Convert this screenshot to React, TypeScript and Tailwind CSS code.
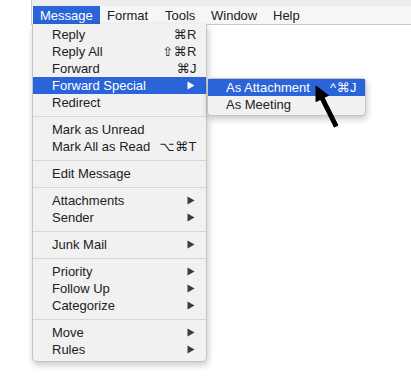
import React from "react";

type Item =
  | { kind: "sep" }
  | { kind: "item"; label: string; shortcut?: string; sub?: boolean; active?: boolean };

const ITEMS: Item[] = [
  { kind: "item", label: "Reply", shortcut: "⌘R" },
  { kind: "item", label: "Reply All", shortcut: "⇧⌘R" },
  { kind: "item", label: "Forward", shortcut: "⌘J" },
  { kind: "item", label: "Forward Special", sub: true, active: true },
  { kind: "item", label: "Redirect" },
  { kind: "sep" },
  { kind: "item", label: "Mark as Unread" },
  { kind: "item", label: "Mark All as Read", shortcut: "⌥⌘T" },
  { kind: "sep" },
  { kind: "item", label: "Edit Message" },
  { kind: "sep" },
  { kind: "item", label: "Attachments", sub: true },
  { kind: "item", label: "Sender", sub: true },
  { kind: "sep" },
  { kind: "item", label: "Junk Mail", sub: true },
  { kind: "sep" },
  { kind: "item", label: "Priority", sub: true },
  { kind: "item", label: "Follow Up", sub: true },
  { kind: "item", label: "Categorize", sub: true },
  { kind: "sep" },
  { kind: "item", label: "Move", sub: true },
  { kind: "item", label: "Rules", sub: true },
];

function SubArrow({ white }: { white?: boolean }) {
  return (
    <svg width="8" height="9" viewBox="0 0 8 9" className="mr-[2px]">
      <path d="M0.5 0.5 L7.5 4.5 L0.5 8.5 Z" fill={white ? "#ffffff" : "#3a3a3a"} />
    </svg>
  );
}

function MenuRow({ item }: { item: Item }) {
  if (item.kind === "sep") {
    return (
      <div className="h-[10px] flex items-center">
        <div className="w-full h-px bg-[#d6d6d6]" />
      </div>
    );
  }
  return (
    <div
      className={`h-[17px] flex items-center justify-between pl-[19px] pr-[9px] ${
        item.active ? "bg-[#2a64d8] text-white" : "text-[#222]"
      }`}
    >
      <span>{item.label}</span>
      {item.shortcut && <span className="tracking-[0.5px]">{item.shortcut}</span>}
      {item.sub && <SubArrow white={item.active} />}
    </div>
  );
}

const BAR = [
  { label: "Message", w: "w-[67px]", active: true },
  { label: "Format", w: "w-[58px]" },
  { label: "Tools", w: "w-[46px]" },
  { label: "Window", w: "w-[62px]" },
  { label: "Help", w: "w-[50px]" },
];

export default function App() {
  return (
    <div
      className="relative w-[411px] h-[381px] bg-white overflow-hidden text-[13px] leading-none"
      style={{ fontFamily: '"Liberation Sans", "DejaVu Sans", sans-serif' }}
    >
      {/* Menu bar */}
      <div className="ml-[31px] bg-[#f6f6f6] border-b border-l border-[#c9c9c9]">
        <div className="h-[6px] bg-[#ededed]" />
        <div className="h-[18px] flex pl-[1px]">
          {BAR.map((b) => (
            <div
              key={b.label}
              className={`${b.w} h-full flex items-center pl-[7px] ${
                b.active ? "bg-[#2a64d8] text-white" : "text-[#222]"
              }`}
            >
              {b.label}
            </div>
          ))}
        </div>
      </div>

      {/* Message menu */}
      <div className="absolute left-[32px] top-[24px] w-[175px] bg-[#f1f1f1] border border-t-0 border-[#c4c4c4] rounded-b-[5px] pt-[2px] pb-[3px] shadow-[1px_3px_7px_rgba(0,0,0,0.22)]">
        {ITEMS.map((it, i) => (
          <MenuRow key={i} item={it} />
        ))}
      </div>

      {/* Forward Special submenu */}
      <div className="absolute left-[207px] top-[78px] w-[159px] bg-[#f1f1f1] border border-[#c4c4c4] rounded-[4px] pb-[2px] shadow-[1px_3px_7px_rgba(0,0,0,0.22)]">
        <div className="h-[17px] flex items-center justify-between pl-[18px] pr-[8px] bg-[#2a64d8] text-white">
          <span>As Attachment</span>
          <span className="tracking-[0.5px]">^⌘J</span>
        </div>
        <div className="h-[17px] flex items-center pl-[18px] text-[#222]">As Meeting</div>
      </div>

      {/* Pointer arrow */}
      <svg className="absolute left-0 top-0" width="411" height="381" viewBox="0 0 411 381">
        <polygon
          points="316,86 316,101.6 320.5,99.4 334.3,127.1 337.9,125.3 324.1,97.6 328.5,95.4"
          fill="#000"
          stroke="#000"
          strokeWidth="1"
          strokeLinejoin="round"
        />
      </svg>
    </div>
  );
}
